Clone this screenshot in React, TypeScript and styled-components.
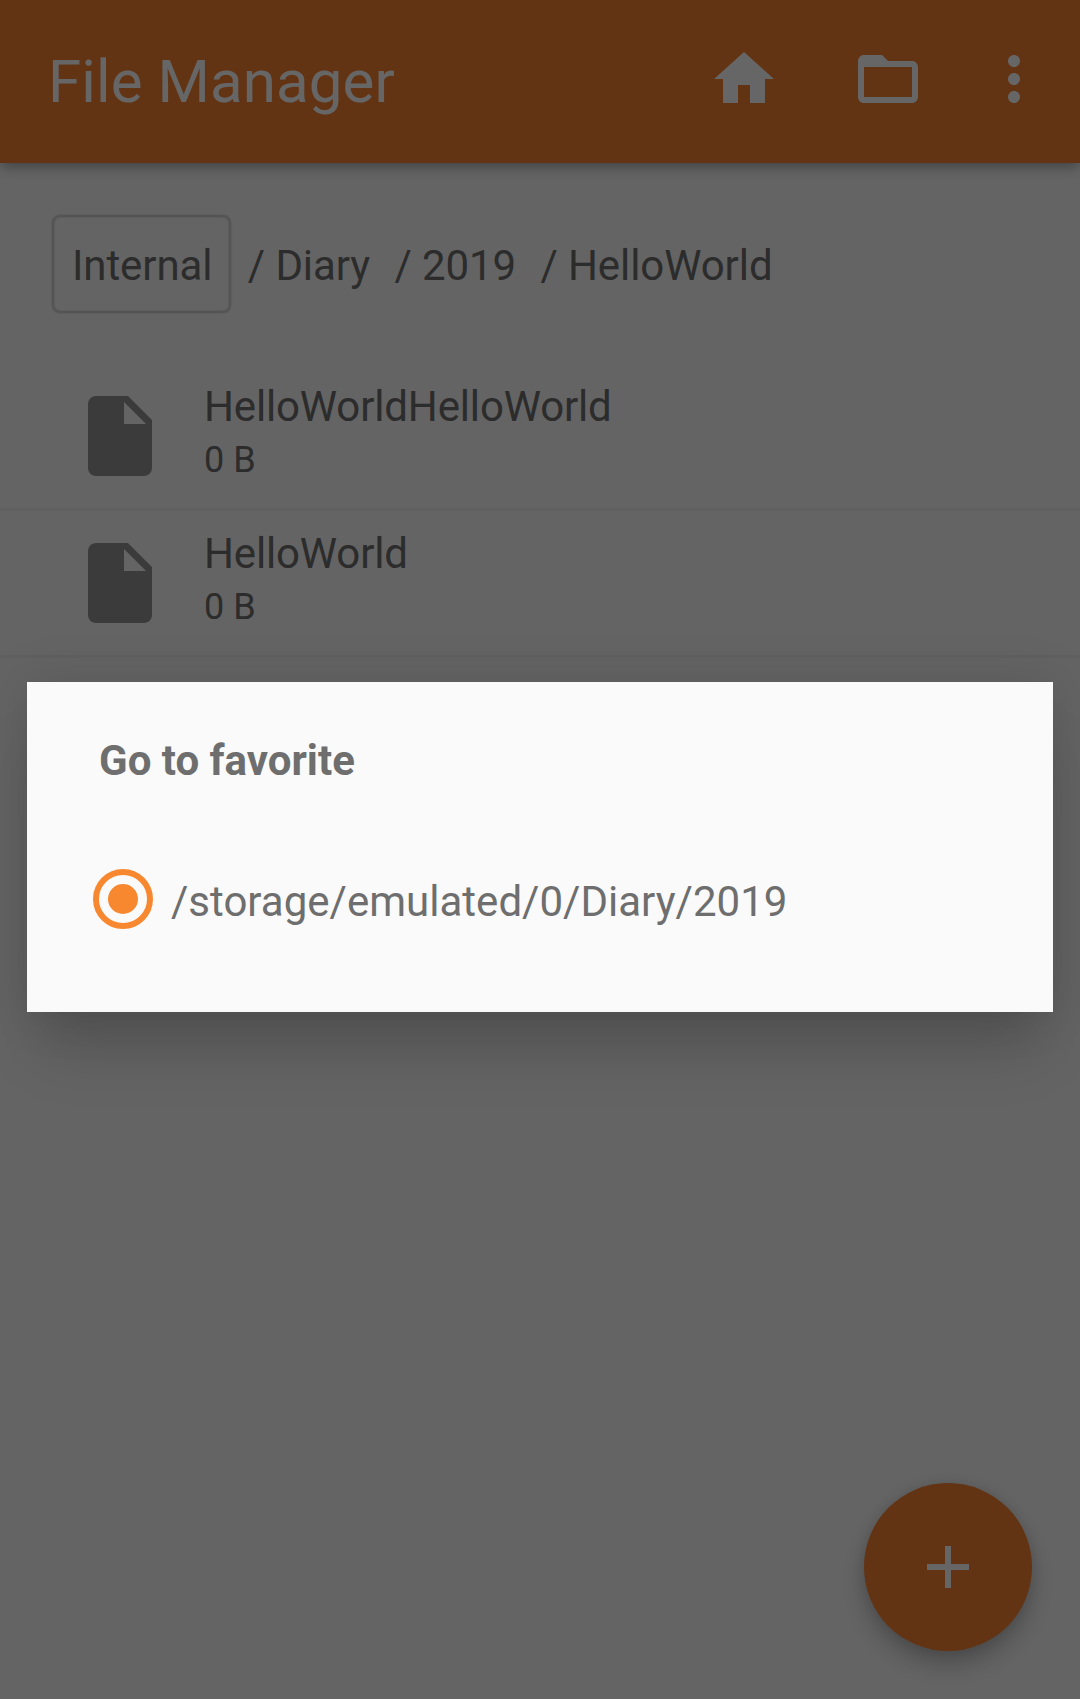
import React from "react";
import styled, { createGlobalStyle } from "styled-components";

const GlobalStyle = createGlobalStyle`
  * { box-sizing: border-box; }
  body { margin: 0; background: #fafafa; }
`;

const Screen = styled.div`
  position: relative;
  display: flex;
  flex-direction: column;
  width: 1080px;
  height: 1699px;
  overflow: hidden;
  background: #fafafa;
  color: #6e6e6e;
  font-family: Roboto, "Liberation Sans", sans-serif;
  font-size: 42px;
  line-height: 50px;
`;

const AppBar = styled.header`
  display: flex;
  align-items: center;
  flex: none;
  height: 163px;
  padding: 0 30px 0 48px;
  background: #f58230;
  color: #fff;
  box-shadow: 0 5px 12px -1px rgba(0, 0, 0, 0.34);
`;

const AppTitle = styled.h1`
  flex: 1;
  margin: 0;
  font-size: 60px;
  font-weight: 400;
  line-height: 71px;
  letter-spacing: 0.1px;
`;

const Actions = styled.div`
  display: flex;
  padding-bottom: 5px;
`;

const Action = styled.button<{ $space?: number }>`
  display: flex;
  margin: 0 0 0 ${(p) => p.$space ?? 0}px;
  padding: 0;
  border: 0;
  background: none;
  color: inherit;
`;

const Glyph = styled.svg<{ $size?: number }>`
  display: block;
  width: ${(p) => p.$size ?? 72}px;
  height: ${(p) => p.$size ?? 72}px;
  fill: currentColor;
`;

const Breadcrumbs = styled.nav`
  display: flex;
  align-items: center;
  gap: 24.3px;
  height: 100px;
  margin: 51px 0 50px 52px;
`;

const RootCrumb = styled.span`
  height: 98px;
  margin-right: -8px;
  padding: 24px 17px 0 18px;
  border: 2px solid #d2d2d2;
  border-radius: 8px;
  letter-spacing: -0.08px;
  box-shadow: 0 0 2px rgba(0, 0, 0, 0.22), inset 0 0 2px rgba(0, 0, 0, 0.22);
`;

const Crumb = styled.span`
  padding-top: 3px;
  letter-spacing: -0.08px;
`;

const FileRow = styled.div`
  display: flex;
  align-items: center;
  gap: 36px;
  height: 147px;
  padding-left: 72px;
  border-bottom: 3px solid #f0f0f0;
`;

const FileIcon = styled(Glyph)`
  color: #949494;
`;

const FileText = styled.div`
  display: flex;
  flex-direction: column;
  gap: 8px;
  padding-bottom: 9px;
`;

const FileName = styled.span`
  line-height: 49px;
  letter-spacing: -0.15px;
`;

const FileSize = styled.span`
  font-size: 36px;
  line-height: 42px;
`;

const Fab = styled.button`
  position: absolute;
  right: 48px;
  bottom: 48px;
  display: grid;
  place-items: center;
  width: 168px;
  height: 168px;
  padding: 0;
  border: 0;
  border-radius: 50%;
  background: #f58230;
  color: #fff;
  box-shadow: 0 14px 26px -2px rgba(0, 0, 0, 0.25), 0 0 14px rgba(0, 0, 0, 0.1);
`;

const Scrim = styled.div`
  position: absolute;
  inset: 0;
  padding: 682px 27px 0;
  background: rgba(0, 0, 0, 0.6);
`;

const Dialog = styled.section`
  display: flex;
  flex-direction: column;
  height: 330px;
  padding: 54px 66px 0;
  background: #fafafa;
  box-shadow: 0 50px 56px -14px rgba(0, 0, 0, 0.17), 0 0 50px rgba(0, 0, 0, 0.12);
`;

const DialogTitle = styled.h2`
  margin: 0 0 0 6px;
  font-size: 42px;
  font-weight: 700;
  line-height: 50px;
`;

const Option = styled.div`
  display: flex;
  align-items: center;
  gap: 18px;
  height: 60px;
  margin-top: 83px;
`;

const Radio = styled.span`
  display: grid;
  place-items: center;
  width: 60px;
  height: 60px;
  border: 6px solid #f88830;
  border-radius: 50%;

  &::after {
    content: "";
    width: 30px;
    height: 30px;
    border-radius: 50%;
    background: #f88830;
  }
`;

const OptionLabel = styled.span`
  padding-top: 6px;
  letter-spacing: 0.02px;
`;

const ICONS = {
  home: "M10 20v-6h4v6h5v-8h3L12 3 2 12h3v8z",
  folder:
    "M20 6h-8l-2-2H4c-1.1 0-1.99.9-1.99 2L2 18c0 1.1.9 2 2 2h16c1.1 0 2-.9 2-2V8c0-1.1-.9-2-2-2zm0 12H4V8h16v10z",
  more: "M12 8c1.1 0 2-.9 2-2s-.9-2-2-2-2 .9-2 2 .9 2 2 2zm0 2c-1.1 0-2 .9-2 2s.9 2 2 2 2-.9 2-2-.9-2-2-2zm0 6c-1.1 0-2 .9-2 2s.9 2 2 2 2-.9 2-2-.9-2-2-2z",
  file: "M6 2c-1.1 0-1.99.9-1.99 2L4 20c0 1.1.89 2 1.99 2H18c1.1 0 2-.9 2-2V8l-6-6H6zm7 7V3.5L18.5 9H13z",
  add: "M19 13h-6v6h-2v-6H5v-2h6V5h2v6h6z",
};

const files = [
  { name: "HelloWorldHelloWorld", size: "0 B" },
  { name: "HelloWorld", size: "0 B" },
];

export default function App() {
  return (
    <>
      <GlobalStyle />
      <Screen>
        <AppBar>
          <AppTitle>File Manager</AppTitle>
          <Actions>
            <Action aria-label="Home">
              <Glyph viewBox="0 0 24 24"><path d={ICONS.home} /></Glyph>
            </Action>
            <Action aria-label="Folder" $space={72}>
              <Glyph viewBox="0 0 24 24"><path d={ICONS.folder} /></Glyph>
            </Action>
            <Action aria-label="More" $space={54}>
              <Glyph viewBox="0 0 24 24"><path d={ICONS.more} /></Glyph>
            </Action>
          </Actions>
        </AppBar>
        <Breadcrumbs>
          <RootCrumb>Internal</RootCrumb>
          {["Diary", "2019", "HelloWorld"].map((c) => (
            <Crumb key={c}>/ {c}</Crumb>
          ))}
        </Breadcrumbs>
        {files.map((f) => (
          <FileRow key={f.name}>
            <FileIcon $size={96} viewBox="0 0 24 24"><path d={ICONS.file} /></FileIcon>
            <FileText>
              <FileName>{f.name}</FileName>
              <FileSize>{f.size}</FileSize>
            </FileText>
          </FileRow>
        ))}
        <Fab aria-label="Add">
          <Glyph viewBox="0 0 24 24"><path d={ICONS.add} /></Glyph>
        </Fab>
        <Scrim>
          <Dialog>
            <DialogTitle>Go to favorite</DialogTitle>
            <Option>
              <Radio />
              <OptionLabel>/storage/emulated/0/Diary/2019</OptionLabel>
            </Option>
          </Dialog>
        </Scrim>
      </Screen>
    </>
  );
}
